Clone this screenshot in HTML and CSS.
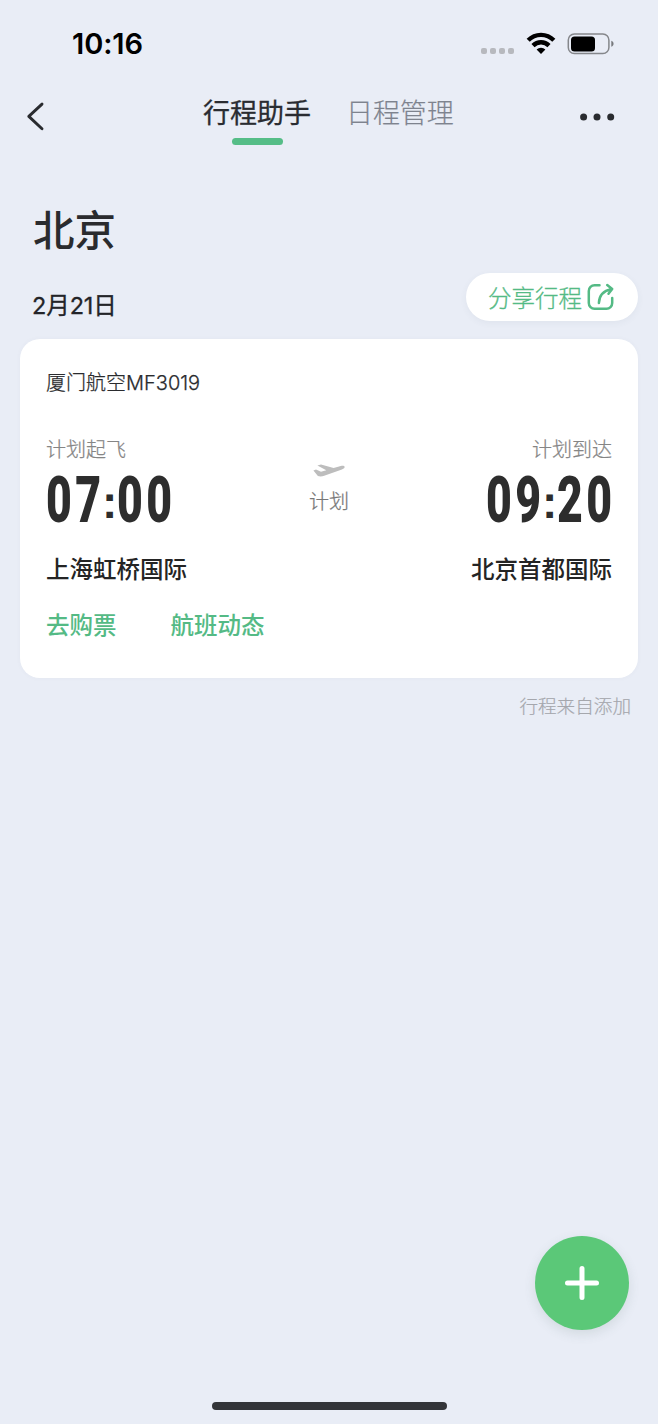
FILE: index.html
```
<!DOCTYPE html>
<html lang="zh-CN">
<head>
<meta charset="utf-8">
<title>行程助手</title>
<link rel="stylesheet" href="styles.css">
</head>
<body>
<div class="screen">
  <header class="status">
    <span class="clock">10:16</span>
    <svg class="status-icons" width="134" height="24" viewBox="0 0 134 24">
      <g fill="#b7b9be"><rect x="1" y="16" width="6" height="6" rx="2"/><rect x="10" y="16" width="6" height="6" rx="2"/><rect x="19" y="16" width="6" height="6" rx="2"/><rect x="28" y="16" width="6" height="6" rx="2"/></g>
      <g fill="none" stroke="#000" stroke-width="4.4"><path d="M48.2 8.2a18 18 0 0 1 25.6 0"/><path d="M53 13.6a11.3 11.3 0 0 1 16 0"/></g>
      <path d="M56.6 17.6a6.4 6.4 0 0 1 8.8 0L61 22.1z"/>
      <rect x="88.3" y="2" width="40.6" height="19.6" rx="6" fill="none" stroke="#85878b" stroke-width="1.5"/>
      <rect x="91" y="4.5" width="24" height="15" rx="3.5"/>
      <path d="M131.3 8.7c3 1 3 5 0 6z" fill="#77797d"/>
    </svg>
  </header>
  <nav class="nav">
    <svg class="back" width="24" height="32" viewBox="0 0 24 32"><path d="M18 4.1 4.8 16.4 18 28.7" fill="none" stroke="#292b2f" stroke-width="2.9" stroke-linecap="round" stroke-linejoin="round"/></svg>
    <div class="tabs">
      <span class="tab active">行程助手</span>
      <span class="tab">日程管理</span>
    </div>
    <svg class="more" width="38" height="10" viewBox="0 0 38 10" fill="#292b2f"><circle cx="5.6" cy="5" r="3.5"/><circle cx="19" cy="5" r="3.5"/><circle cx="32.7" cy="5" r="3.5"/></svg>
  </nav>
  <main class="content">
    <h1 class="city">北京</h1>
    <div class="day">
      <span class="date">2月21日</span>
      <button class="share">分享行程<svg width="28" height="28" viewBox="0 0 28 28" fill="none" stroke="#54ba85" stroke-width="2.5" stroke-linecap="round" stroke-linejoin="round"><path d="M12.5 2.3H7.5a5.7 5.7 0 0 0-5.7 5.7v12a5.7 5.7 0 0 0 5.7 5.7h12a5.7 5.7 0 0 0 5.7-5.7V15"/><path d="M11.9 20c.2-7 4-12.2 12.5-13.8M20.2 2l5 4-3.7 4.8"/></svg></button>
    </div>
    <section class="card">
      <div class="flight">厦门航空MF3019</div>
      <div class="route">
        <div class="stop">
          <div class="label">计划起飞</div>
          <div class="time"><span class="digits"><b>07</b></span><span class="colon">:</span><span class="digits"><b>00</b></span></div>
          <div class="airport">上海虹桥国际</div>
        </div>
        <div class="state">
          <svg width="32" height="14" viewBox="0 0 32 14" fill="#bdbdbd"><path d="M.4 6.4 3 5.6l5 2.1 5.3-1.5L4.4 1.6 8 .6l12.6 3.5 7.2-2c2-.5 3.5-.3 3.8.6.3 1-.8 2-2.7 2.7L11.2 11.8c-2 .7-4.5 1-6.3.2z"/></svg>
          <span>计划</span>
        </div>
        <div class="stop arrive">
          <div class="label">计划到达</div>
          <div class="time"><span class="digits"><b>09</b></span><span class="colon">:</span><span class="digits"><b>20</b></span></div>
          <div class="airport">北京首都国际</div>
        </div>
      </div>
      <div class="actions"><a>去购票</a><a>航班动态</a></div>
    </section>
    <p class="source">行程来自添加</p>
  </main>
  <button class="add"><svg width="36" height="36" viewBox="0 0 36 36" stroke="#fff" stroke-width="5" stroke-linecap="round"><path d="M18 3.5v29M3.5 18h29"/></svg></button>
  <div class="home"></div>
</div>
</body>
</html>
```
FILE: styles.css
```
* { box-sizing: border-box; }
body { margin: 0; background: #e9edf6; color: #2a2b2e; font-family: Inter, "Noto Sans CJK SC", sans-serif; }
.screen { width: 658px; height: 1424px; display: flex; flex-direction: column; position: relative; }
.status { height: 88px; padding: 0 44px 0 72px; display: flex; align-items: center; justify-content: space-between; }
.clock { font-size: 29px; line-height: 34px; margin-bottom: 1px; font-weight: 600; letter-spacing: -.1px; color: #000; }
.nav { height: 72px; padding: 0 42px 0 24px; display: flex; align-items: flex-start; }
.back { margin-top: 12px; }
.tabs { display: flex; gap: 35px; margin-left: 155px; padding-top: 7px; flex: 1; }
.tab { font-size: 27px; line-height: 34px; color: #7e838e; height: 51px; white-space: nowrap; font-family: "Noto Sans CJK SC", sans-serif; font-weight: 300; -webkit-text-stroke: .2px; letter-spacing: -.1px; }
.tab.active { color: #2a2c31; font-weight: 400; -webkit-text-stroke: .3px; display: flex; flex-direction: column; align-items: center; letter-spacing: 0; }
.tab.active::after { content: ""; width: 51px; height: 7px; border-radius: 4px; background: #55bd87; margin-top: 9px; }
.more { margin-top: 24px; }
.content { padding: 0 20px; display: flex; flex-direction: column; }
.city { margin: 42px 0 0 13px; font-size: 41.5px; line-height: 58px; font-weight: 500; }
.day { height: 79px; padding: 13px 0 0 12px; display: flex; justify-content: space-between; align-items: flex-start; }
.date { font-size: 23.5px; line-height: 34px; margin-top: 16px; font-weight: 400; -webkit-text-stroke: .3px; letter-spacing: -.1px; color: #232428; }
.share { width: 172px; height: 48px; padding: 0 0 0 22px; border: 0; border-radius: 24px; background: #fff; color: #54ba85; font: 300 23.5px/46px "Noto Sans CJK SC", sans-serif; -webkit-text-stroke: .3px; display: flex; align-items: center; gap: 5px; white-space: nowrap; box-shadow: 0 2px 7px rgba(70, 80, 110, .06); }
.card { height: 339px; border-radius: 20px; background: #fff; padding: 27px 26px; box-shadow: 0 0 5px rgba(70, 80, 110, .04); }
.flight { font-size: 20px; line-height: 34px; letter-spacing: 0; font-weight: 300; -webkit-text-stroke: .25px; }
.route { display: flex; justify-content: space-between; margin-top: 33px; }
.label { font: 300 20px/32px "Noto Sans CJK SC", sans-serif; -webkit-text-stroke: .25px; color: #858585; }
.time { display: flex; height: 74px; font: 700 65.5px/70px Roboto, sans-serif; color: #2d2d2d; width: 126px; white-space: nowrap; }
.digits { width: 56px; }
.digits b { display: inline-block; transform: scaleX(.68); transform-origin: left; letter-spacing: 5px; }
.colon { width: 14px; margin-right: 1px; text-align: center; font: 700 46px/74px "Liberation Sans", sans-serif; }
.airport { font-size: 23.5px; line-height: 34px; margin-top: 14px; font-weight: 500; color: #242424; white-space: nowrap; }
.stop { width: 142px; }
.arrive { display: flex; flex-direction: column; align-items: flex-end; }
.state { display: flex; flex-direction: column; align-items: center; padding-top: 31px; font: 300 20px/32px "Noto Sans CJK SC", sans-serif; -webkit-text-stroke: .25px; color: #777; }
.state span { margin-top: 7px; }
.actions { display: flex; gap: 54px; margin-top: 22px; font-size: 23.5px; line-height: 34px; font-weight: 500; color: #54ba85; }
.source { margin: 11px 7px 0 0; text-align: right; font: 300 18.6px/32px "Noto Sans CJK SC", sans-serif; -webkit-text-stroke: .2px; color: #a5a7ad; }
.add { position: absolute; left: 535px; top: 1236px; width: 94px; height: 94px; border: 0; border-radius: 50%; padding: 0; background: #5bc878; display: flex; align-items: center; justify-content: center; box-shadow: 0 4px 12px rgba(70, 100, 90, .14); }
.home { width: 235px; height: 8px; border-radius: 4px; background: #333539; margin: auto auto 14px; }
```
